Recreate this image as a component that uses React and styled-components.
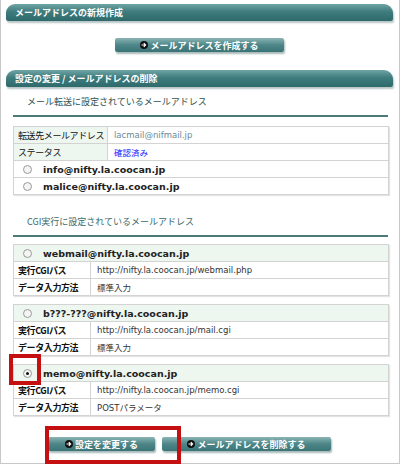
import React from 'react';
import styled, { createGlobalStyle } from 'styled-components';

const Global = createGlobalStyle`
  body { margin: 0; background: #fff; font-family: Verdana, "DejaVu Sans", "Noto Sans CJK JP", sans-serif; }
`;

const Frame = styled.div`
  width: 400px;
  height: 464px;
  box-sizing: border-box;
  border: 1px solid #c8c8c8;
  border-top: none;
  padding: 4px 6px 0 5px;
  overflow: hidden;
`;

const Bar = styled.div`
  height: 17px;
  border-radius: 9px 9px 2px 2px;
  background: linear-gradient(#6fa4a4 0%, #3f7c7e 45%, #2e6a6c 100%);
  box-shadow: 1px 2px 2px #b8c4c4;
  color: #fff;
  font-size: 9px;
  font-weight: bold;
  line-height: 17px;
  padding-left: 9px;
  font-family: "Noto Sans CJK JP", sans-serif;
`;

const BtnRow = styled.div`
  display: flex;
  justify-content: center;
  gap: ${p => p.gap || 0}px;
  margin: ${p => p.m};
`;

const Btn = styled.div`
  width: ${p => p.w}px;
  height: 14px;
  border-radius: 2px;
  background: linear-gradient(#8bb4b4 0%, #4c8688 50%, #3a7476 100%);
  box-shadow: 1px 2px 2px #a9b9b9;
  color: #fff;
  font-size: 9px;
  font-weight: bold;
  display: flex;
  align-items: center;
  justify-content: center;
  gap: 2px;
  font-family: "Noto Sans CJK JP", sans-serif;
`;

const Arrow = () => (
  <svg width="8" height="8" viewBox="0 0 8 8">
    <circle cx="4" cy="4" r="4" fill="#111" />
    <path d="M1.5 4h4M3.8 2.2L5.6 4 3.8 5.8" stroke="#fff" strokeWidth="1.2" fill="none" />
  </svg>
);

const Sub = styled.div`
  margin: ${p => p.m};
  padding: 0 0 7px 14px;
  border-bottom: 2px solid #4a7a7a;
  color: ${p => p.c || '#2e4f50'};
  font-size: 9px;
  font-family: "Noto Sans CJK JP", sans-serif;
  margin-left: 7px;
  margin-right: 5px;
`;

const Table = styled.div`
  margin: ${p => p.m};
  margin-left: 7px;
  margin-right: 4px;
  border: 1px solid #d3d3d3;
  box-shadow: 1px 1px 1px #e4e4e4;
`;

const Row = styled.div`
  display: flex;
  height: 16px;
  border-top: ${p => (p.first ? 'none' : '1px solid #d3d3d3')};
  background: ${p => (p.head ? '#eef6f0' : '#fff')};
  align-items: center;
  font-size: 9px;
`;

const Key = styled.div`
  width: ${p => p.w}px;
  flex-shrink: 0;
  height: 100%;
  box-sizing: border-box;
  padding-left: 4px;
  background: ${p => (p.tint ? '#eef6f0' : '#fff')};
  border-right: 1px solid #d3d3d3;
  display: flex;
  align-items: center;
  white-space: nowrap;
  letter-spacing: -0.4px;
  color: #111;
  font-weight: ${p => (p.tint ? 'normal' : 'bold')};
  font-family: "Noto Sans CJK JP", sans-serif;
`;

const Val = styled.div`
  padding-left: 6px;
  color: ${p => p.c || '#333'};
  font-size: 8.5px;
`;

const Radio = styled.span`
  position: relative;
  flex-shrink: 0;
  width: 7px;
  height: 7px;
  border-radius: 50%;
  border: 1px solid #999;
  background: #f4f4f4;
  margin: 0 11px 0 9px;
  &::after {
    content: '';
    display: ${p => (p.on ? 'block' : 'none')};
    position: absolute;
    left: 2px;
    top: 2px;
    width: 3px;
    height: 3px;
    border-radius: 50%;
    background: #111;
  }
`;

const Addr = styled.span`
  font-weight: bold;
  font-size: 9.5px;
  color: #222;
`;

const Mark = styled.div`
  position: absolute;
  border: 4px solid #c41010;
  left: ${p => p.x}px;
  top: ${p => p.y}px;
  width: ${p => p.w}px;
  height: ${p => p.h}px;
  box-sizing: border-box;
`;

const Wrap = styled.div`
  position: relative;
`;

const Cgi = ({ addr, path, mode, on, m }) => (
  <Table m={m}>
    <Row first head><Radio on={on} /><Addr>{addr}</Addr></Row>
    <Row><Key w={77}>実行CGIパス</Key><Val>{path}</Val></Row>
    <Row><Key w={77}>データ入力方法</Key><Val>{mode}</Val></Row>
  </Table>
);

export default function App() {
  return (
    <Wrap>
      <Global />
      <Frame>
        <Bar>メールアドレスの新規作成</Bar>
        <BtnRow m="17px 0 0 0"><Btn w={169}><Arrow />メールアドレスを作成する</Btn></BtnRow>
        <Bar style={{ marginTop: 18 }}>設定の変更 / メールアドレスの削除</Bar>
        <Sub m="8px 0 0 0">メール転送に設定されているメールアドレス</Sub>
        <Table m="9px 0 0 0">
          <Row first><Key w={94} tint>転送先メールアドレス</Key><Val c="#6a8a99">lacmail@nifmail.jp</Val></Row>
          <Row><Key w={94} tint>ステータス</Key><Val c="#1a1aff">確認済み</Val></Row>
          <Row><Radio /><Addr>info@nifty.la.coocan.jp</Addr></Row>
          <Row><Radio /><Addr>malice@nifty.la.coocan.jp</Addr></Row>
        </Table>
        <Sub m="20px 0 0 0" c="#3a6a6a">CGI実行に設定されているメールアドレス</Sub>
        <Cgi m="7px 0 0 0" addr="webmail@nifty.la.coocan.jp" path="http://nifty.la.coocan.jp/webmail.php" mode="標準入力" />
        <Cgi m="8px 0 0 0" addr="b???-???@nifty.la.coocan.jp" path="http://nifty.la.coocan.jp/mail.cgi" mode="標準入力" />
        <Cgi m="8px 0 0 0" on addr="memo@nifty.la.coocan.jp" path="http://nifty.la.coocan.jp/memo.cgi" mode="POSTパラメータ" />
        <BtnRow m="21px 0 0 0" gap={7} style={{ paddingRight: 20 }}>
          <Btn w={107}><Arrow />設定を変更する</Btn>
          <Btn w={169}><Arrow />メールアドレスを削除する</Btn>
        </BtnRow>
      </Frame>
      <Mark x={9} y={354} w={32} h={31} />
      <Mark x={45} y={426} w={136} h={38} />
    </Wrap>
  );
}
